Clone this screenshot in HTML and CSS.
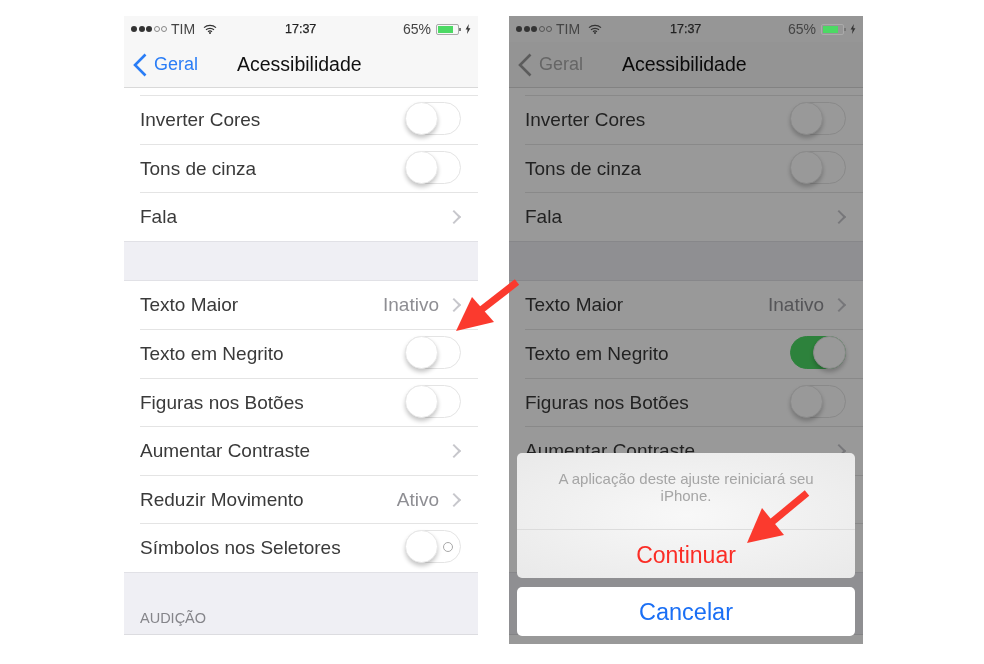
FILE: index.html
```html
<!DOCTYPE html>
<html lang="en">
<head>
    <meta charset="UTF-8">
    <meta name="viewport" content="width=device-width, initial-scale=1.0">
    <title>Acessibilidade</title>
    <link rel="stylesheet" href="styles.css">
</head>
<body>
    <div class="page">
        <div class="phone">
            <div class="status">
                <span class="dots"><i></i><i></i><i></i><i class="off"></i><i class="off"></i></span>
                <span class="carrier">TIM</span>
                <svg class="wifi" viewBox="0 0 14 10"><path d="M1 3.6C4.4.6 9.6.6 13 3.6M3 5.7C5.2 3.8 8.8 3.8 11 5.7M5 7.7C6.2 6.8 7.8 6.8 9 7.7" fill="none" stroke="#333" stroke-width="1.2"/><circle cx="7" cy="9" r="1" fill="#333"/></svg>
                <span class="time">17:37</span>
                <span class="pct">65%</span>
                <span class="battery"><b></b></span>
                <svg class="bolt" viewBox="0 0 6 10"><path d="M3.8 0L.6 5.6H2.6L2 10L5.4 4.2H3.3Z" fill="#333"/></svg>
            </div>
            <div class="nav">
                <svg class="back" viewBox="0 0 14 24"><path d="M12.5 1.5L2 12L12.5 22.5" fill="none" stroke="currentColor" stroke-width="2.6"/></svg>
                <span class="back-label">Geral</span>
                <span class="title">Acessibilidade</span>
            </div>
            <div class="list first">
                <div class="row"><span>Inverter Cores</span><span class="toggle"></span></div>
                <div class="row"><span>Tons de cinza</span><span class="toggle"></span></div>
                <div class="row"><span>Fala</span><span class="chev"></span></div>
            </div>
            <div class="gap"></div>
            <div class="list second">
                <div class="row"><span>Texto Maior</span><span class="value">Inativo</span><span class="chev"></span></div>
                <div class="row"><span>Texto em Negrito</span><span class="toggle"></span></div>
                <div class="row"><span>Figuras nos Botões</span><span class="toggle"></span></div>
                <div class="row"><span>Aumentar Contraste</span><span class="chev"></span></div>
                <div class="row"><span>Reduzir Movimento</span><span class="value">Ativo</span><span class="chev"></span></div>
                <div class="row"><span>Símbolos nos Seletores</span><span class="toggle labelled"></span></div>
            </div>
            <div class="section-head">AUDIÇÃO</div>
        </div>

        <div class="phone dimmed">
            <div class="status">
                <span class="dots"><i></i><i></i><i></i><i class="off"></i><i class="off"></i></span>
                <span class="carrier">TIM</span>
                <svg class="wifi" viewBox="0 0 14 10"><path d="M1 3.6C4.4.6 9.6.6 13 3.6M3 5.7C5.2 3.8 8.8 3.8 11 5.7M5 7.7C6.2 6.8 7.8 6.8 9 7.7" fill="none" stroke="#333" stroke-width="1.2"/><circle cx="7" cy="9" r="1" fill="#333"/></svg>
                <span class="time">17:37</span>
                <span class="pct">65%</span>
                <span class="battery"><b></b></span>
                <svg class="bolt" viewBox="0 0 6 10"><path d="M3.8 0L.6 5.6H2.6L2 10L5.4 4.2H3.3Z" fill="#333"/></svg>
            </div>
            <div class="nav">
                <svg class="back" viewBox="0 0 14 24"><path d="M12.5 1.5L2 12L12.5 22.5" fill="none" stroke="currentColor" stroke-width="2.6"/></svg>
                <span class="back-label">Geral</span>
                <span class="title">Acessibilidade</span>
            </div>
            <div class="list first">
                <div class="row"><span>Inverter Cores</span><span class="toggle"></span></div>
                <div class="row"><span>Tons de cinza</span><span class="toggle"></span></div>
                <div class="row"><span>Fala</span><span class="chev"></span></div>
            </div>
            <div class="gap"></div>
            <div class="list second">
                <div class="row"><span>Texto Maior</span><span class="value">Inativo</span><span class="chev"></span></div>
                <div class="row"><span>Texto em Negrito</span><span class="toggle on"></span></div>
                <div class="row"><span>Figuras nos Botões</span><span class="toggle"></span></div>
                <div class="row"><span>Aumentar Contraste</span><span class="chev"></span></div>
                <div class="row"></div>
                <div class="row"></div>
            </div>
            <div class="section-head"></div>

            <div class="overlay"></div>
            <div class="sheet">
                <div class="sheet-box">
                    <p class="sheet-msg">A aplicação deste ajuste reiniciará seu iPhone.</p>
                    <div class="sheet-btn danger">Continuar</div>
                </div>
                <div class="sheet-btn cancel">Cancelar</div>
            </div>
        </div>

        <svg class="arrows" viewBox="0 0 984 664">
            <path d="M517 282L481 310" stroke="#fb3a2e" stroke-width="7" fill="none"/>
            <path d="M456 331L472 297L494 322Z" fill="#fb3a2e"/>
            <path d="M807 493L772 522" stroke="#fb3a2e" stroke-width="7" fill="none"/>
            <path d="M747 543L762 508L784 535Z" fill="#fb3a2e"/>
        </svg>
    </div>
</body>
</html>
```

FILE: styles.css
```css
html, body {
    margin: 0;
    background: #fff;
}

body {
    font-family: "Liberation Sans", Arial, sans-serif;
    color: #3a3a3a;
}

.page {
    width: 984px;
    height: 664px;
    box-sizing: border-box;
    padding: 16px 121px 0 124px;
    display: flex;
    gap: 31px;
    overflow: hidden;
    position: relative;
}

.phone {
    width: 354px;
    height: 628px;
    flex: none;
    position: relative;
    overflow: hidden;
    background: #fff;
    filter: blur(0.4px);
}

/* status bar */
.status {
    height: 26px;
    background: #f7f7f7;
    display: flex;
    align-items: center;
    font-size: 14px;
    color: #444;
    padding-left: 7px;
    position: relative;
}

.dots {
    display: flex;
    gap: 1.5px;
}

.dots i {
    width: 6px;
    height: 6px;
    border-radius: 50%;
    background: #333;
    box-sizing: border-box;
}

.dots i.off {
    background: none;
    border: 1px solid #888;
}

.carrier {
    margin-left: 4px;
    width: 24px;
}

.wifi {
    width: 14px;
    height: 10px;
    margin-left: 8px;
}

.time {
    margin-left: 68px;
    font-size: 12.5px;
    color: #222;
    -webkit-text-stroke: 0.25px #222;
    width: 36px;
}

.pct {
    margin-left: 82px;
    width: 28px;
}

.battery {
    width: 21px;
    height: 9px;
    border: 1px solid #aaa;
    border-radius: 2px;
    margin-left: 5px;
    display: block;
    position: relative;
}

.battery b {
    display: block;
    width: 15px;
    height: 7px;
    margin: 1px;
    background: #4cd964;
}

.battery::after {
    content: "";
    position: absolute;
    right: -3px;
    top: 3px;
    width: 2px;
    height: 3px;
    background: #777;
}

.bolt {
    width: 6px;
    height: 10px;
    margin-left: 6px;
}

/* nav bar */
.nav {
    height: 45px;
    background: #f7f7f7;
    border-bottom: 1px solid #d9d9d9;
    display: flex;
    align-items: center;
    font-size: 18px;
    padding-left: 9px;
    color: #2a7df6;
}

.back {
    width: 14px;
    height: 24px;
}

.back-label {
    margin-left: 7px;
    width: 83px;
}

.title {
    color: #111;
    font-size: 19.5px;
}

/* rows */
.list {
    background: #fff;
    border-bottom: 1px solid #e1e1e6;
}

.list.first {
    padding-top: 7px;
}

.list.second {
    border-top: 1px solid #e1e1e6;
}

.gap {
    height: 38px;
    background: #efeff4;
}

.row {
    height: 48.5px;
    box-sizing: border-box;
    margin-left: 16px;
    padding: 1px 17px 0 0;
    border-top: 1px solid #e4e4e4;
    display: flex;
    align-items: center;
    font-size: 19px;
}

.list.second .row:first-child {
    border-top: none;
}

.row > span:first-child {
    flex: 1;
}

.value {
    color: #8e8e93;
    margin-right: 10px;
}

.chev {
    width: 10px;
    height: 10px;
    box-sizing: border-box;
    border-top: 2px solid #c7c7cc;
    border-right: 2px solid #c7c7cc;
    transform: rotate(45deg);
    margin-right: 2px;
}

.toggle {
    width: 56px;
    height: 33px;
    margin-top: -3px;
    box-sizing: border-box;
    border: 1px solid #e4e4e4;
    border-radius: 17px;
    position: relative;
    background: #fff;
}

.toggle::before {
    content: "";
    position: absolute;
    left: -1px;
    top: -1px;
    width: 33px;
    height: 33px;
    box-sizing: border-box;
    border-radius: 50%;
    background: #fff;
    border: 1px solid #e8e8e8;
    box-shadow: 0 3px 4px rgba(0, 0, 0, 0.22);
}

.toggle.on {
    background: #4cd964;
    border-color: #4cd964;
}

.toggle.on::before {
    left: auto;
    right: -1px;
}

.toggle.labelled::after {
    content: "";
    position: absolute;
    right: 7px;
    top: 11px;
    width: 10px;
    height: 10px;
    box-sizing: border-box;
    border: 1px solid #a8a8a8;
    border-radius: 50%;
}

.section-head {
    height: 62px;
    box-sizing: border-box;
    padding: 37px 0 0 16px;
    background: #efeff4;
    border-bottom: 1px solid #dcdce0;
    font-size: 14.5px;
    color: #85858a;
}

/* action sheet */
.overlay {
    position: absolute;
    inset: 0;
    background: rgba(0, 0, 0, 0.4);
}

.dimmed .status {
    z-index: 2;
    background: #969696;
}

.dimmed .status .dots i.off {
    border-color: #555;
}

.dimmed .nav {
    color: #aaa;
}

.dimmed .back {
    color: #999;
}

.sheet {
    position: absolute;
    left: 8px;
    right: 8px;
    top: 437px;
    display: flex;
    flex-direction: column;
    gap: 9px;
}

.sheet-box {
    height: 125px;
    border-radius: 5px;
    background: radial-gradient(ellipse at center, #f8f8f8 0%, #e9e9e9 100%);
    display: flex;
    flex-direction: column;
}

.sheet-msg {
    margin: 0;
    height: 77px;
    box-sizing: border-box;
    padding: 17px 20px 0;
    font-size: 15px;
    line-height: 17px;
    text-align: center;
    color: #a5a5a5;
    border-bottom: 1px solid #dcdcdc;
}

.sheet-btn {
    height: 48px;
    line-height: 50px;
    text-align: center;
    font-size: 23px;
}

.danger {
    color: #fb2d26;
}

.cancel {
    background: #fff;
    border-radius: 5px;
    color: #1a6ff5;
    height: 49px;
    font-size: 23.5px;
}

/* annotation arrows on top of both screens */
.arrows {
    position: absolute;
    left: 0;
    top: 0;
    width: 984px;
    height: 664px;
}
```
